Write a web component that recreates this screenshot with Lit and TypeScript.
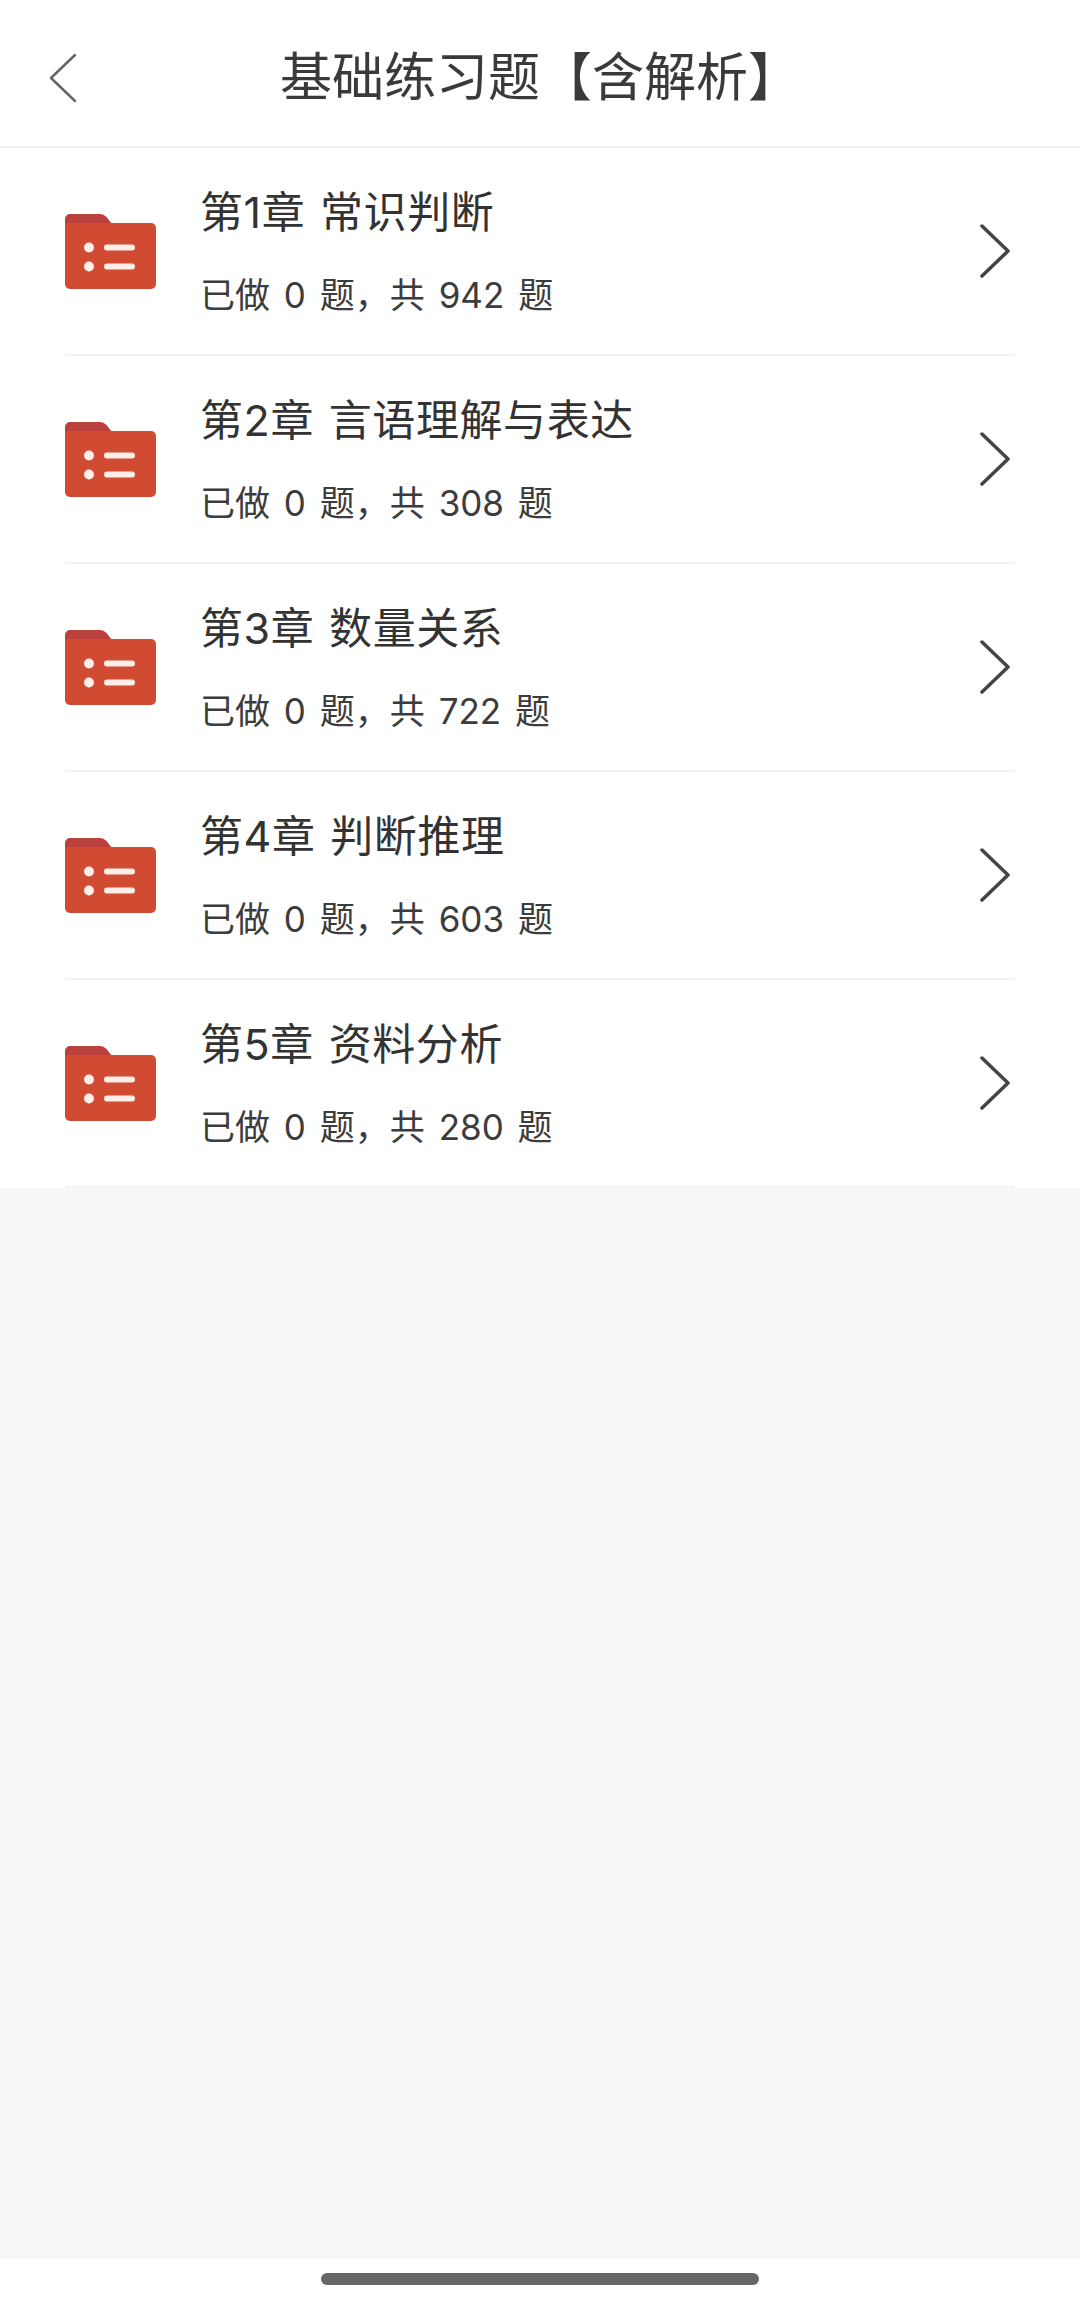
import { LitElement, html, css, svg } from 'lit';
import { customElement } from 'lit/decorators.js';

const chapters = [
  { title: '第1章 常识判断', done: 0, total: 942 },
  { title: '第2章 言语理解与表达', done: 0, total: 308 },
  { title: '第3章 数量关系', done: 0, total: 722 },
  { title: '第4章 判断推理', done: 0, total: 603 },
  { title: '第5章 资料分析', done: 0, total: 280 },
];

const folderIcon = svg`
  <svg class="folder" viewBox="0 0 91 75" aria-hidden="true">
    <path d="M0 5a5 5 0 0 1 5-5h30a8 8 0 0 1 6 2.500L47 10H0z" fill="#b9403c" />
    <path d="M0 9h86a5 5 0 0 1 5 5v56a5 5 0 0 1-5 5H5a5 5 0 0 1-5-5z" fill="#d14a32" />
    <circle cx="24" cy="33.500" r="5" fill="#fdeee9" />
    <circle cx="24" cy="52.500" r="5" fill="#fdeee9" />
    <rect x="39" y="30.500" width="31" height="6" rx="3" fill="#fdeee9" />
    <rect x="39" y="49.500" width="31" height="6" rx="3" fill="#fdeee9" />
  </svg>
`;

@customElement('app-root')
export class AppRoot extends LitElement {
  static styles = css`
    :host {
      display: flex;
      flex-direction: column;
      height: 2304px;
      background: #f7f7f7;
      color: #333;
      font-family: Inter, 'Noto Sans CJK SC', 'Noto Sans', sans-serif;
    }
    .header {
      height: 146px;
      display: flex;
      align-items: center;
      justify-content: center;
      position: relative;
      background: #fff;
      border-bottom: 2px solid #f3f3f3;
    }
    .back {
      position: absolute;
      left: 48px;
      top: 53px;
      width: 30px;
      height: 50px;
    }
    .header h1 {
      margin: 2px 0 0;
      font-family: 'Noto Sans CJK SC', sans-serif;
      font-size: 52px;
      font-weight: 400;
      line-height: 1;
      color: #3a3a3a;
    }
    .list {
      background: #fff;
      padding: 0 65px;
    }
    .row {
      height: 206px;
      display: flex;
      align-items: center;
      border-bottom: 2px solid #f3f3f3;
    }
    .folder {
      width: 91px;
      height: 75px;
      flex: none;
    }
    .info {
      flex: 1;
      margin-left: 44px;
    }
    .name {
      font-size: 43px;
      line-height: 56px;
      letter-spacing: 0.6px;
      word-spacing: 2px;
      color: #333;
    }
    .count {
      font-size: 35px;
      line-height: 48px;
      word-spacing: 4px;
      margin-top: 31px;
      color: #3c3c3c;
    }
    .chevron {
      width: 32px;
      height: 54px;
      flex: none;
      margin-right: 4px;
    }
    .spacer {
      flex: 1;
    }
    .home {
      height: 45px;
      background: #fff;
      display: flex;
      justify-content: center;
      padding-top: 14px;
      box-sizing: border-box;
    }
    .home span {
      width: 438px;
      height: 12px;
      border-radius: 6px;
      background: #666;
    }
    svg path.line {
      fill: none;
      stroke-linecap: round;
      stroke-linejoin: round;
    }
  `;

  render() {
    return html`
      <div class="header">
        <svg class="back" viewBox="0 0 30 50" aria-hidden="true">
          <path class="line" d="M27 2 L3 25 L27 48" stroke="#666" stroke-width="2.500" />
        </svg>
        <h1>基础练习题【含解析】</h1>
      </div>
      <div class="list">
        ${chapters.map(
          (c) => html`
            <div class="row">
              ${folderIcon}
              <div class="info">
                <div class="name">${c.title}</div>
                <div class="count">已做 ${c.done} 题，共 ${c.total} 题</div>
              </div>
              <svg class="chevron" viewBox="0 0 32 54" aria-hidden="true">
                <path class="line" d="M3 2 L29 27 L3 52" stroke="#444" stroke-width="3.500" />
              </svg>
            </div>
          `
        )}
      </div>
      <div class="spacer"></div>
      <div class="home"><span></span></div>
    `;
  }
}
